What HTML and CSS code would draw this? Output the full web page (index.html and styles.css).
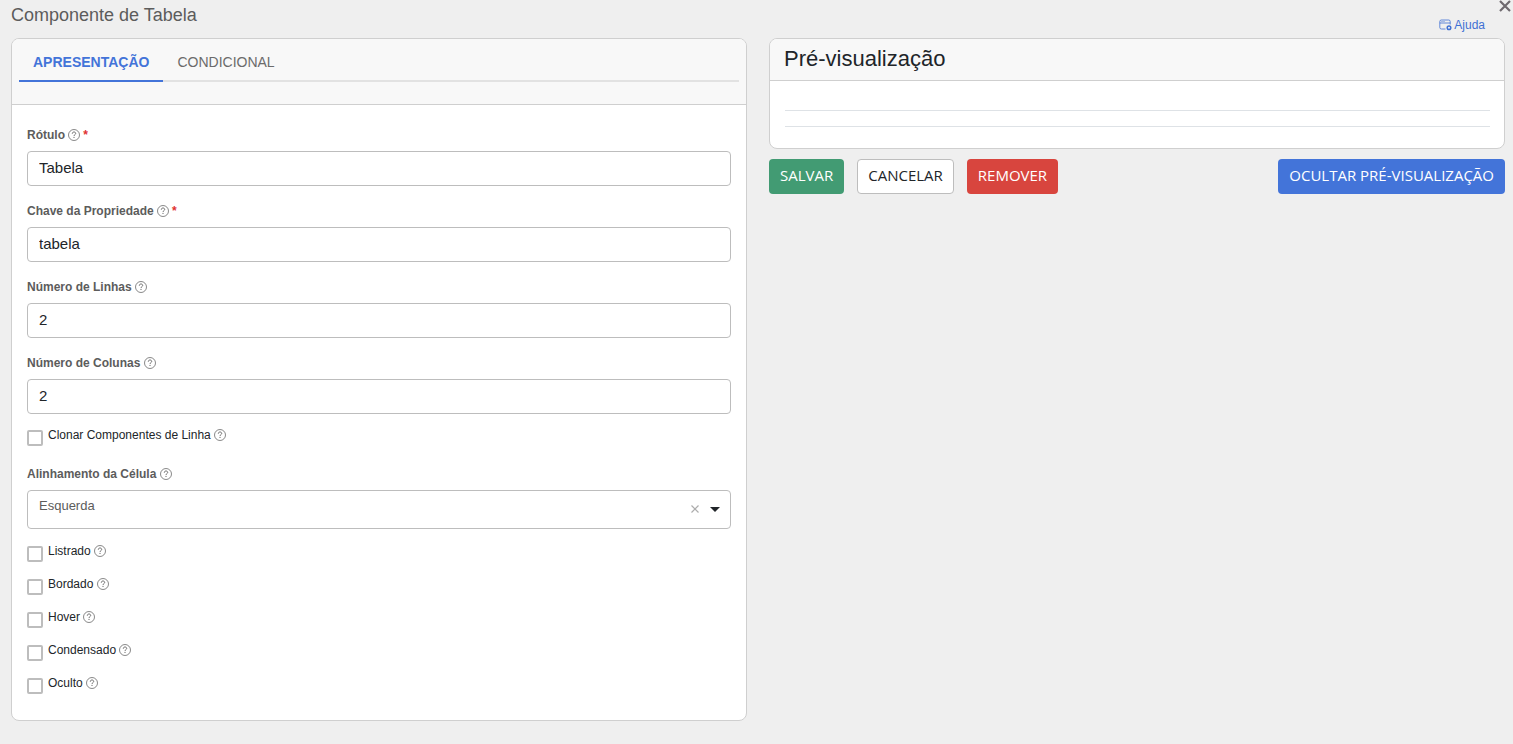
FILE: index.html
```html
<!DOCTYPE html>
<html lang="pt-BR">
<head>
<meta charset="utf-8">
<meta name="viewport" content="width=device-width, initial-scale=1">
<title>Componente de Tabela</title>
<link rel="stylesheet" href="styles.css">
</head>
<body>
<svg class="sprite" aria-hidden="true">
  <symbol id="help" viewBox="0 0 12 12">
    <circle cx="6" cy="6" r="5.5" fill="none" stroke="currentColor" stroke-width=".8"/>
    <path d="M4.3 4.7C4.3 3.6 5 3 6 3s1.700.6 1.700 1.500C7.700 5.600 6 5.600 6 7.100" fill="none" stroke="currentColor" stroke-width="1"/>
    <path d="M5.500 8h1v1.100h-1z" fill="currentColor"/>
  </symbol>
</svg>
<button class="close" type="button" aria-label="Fechar">
  <svg viewBox="0 0 12 12" width="12" height="12"><path d="M1 1l10 10M11 1l-10 10" stroke="currentColor" stroke-width="2.200"/></svg>
</button>
<header class="top">
  <h1 class="title">Componente de Tabela</h1>
  <a class="help-link" href="#">
    <svg viewBox="0 0 13 12" width="13" height="12" fill="none" stroke="currentColor" stroke-width=".8">
      <path d="M6.500 10H2.500Q.8 10 .8 8.500V2.500Q.8 1 2.300 1H9.700Q11.200 1 11.200 2.500V5.500M.8 4H11.200"/>
      <path d="M2.500 2.500h1M4.500 2.500h1"/>
      <circle cx="10" cy="8.800" r="1.800" stroke-width="1.500"/>
    </svg>
    Ajuda</a>
</header>
<main class="columns">
  <section class="card settings">
    <div class="card-head tabs-head">
      <div class="tabs" role="tablist">
        <button class="tab active" type="button" role="tab" aria-selected="true">APRESENTAÇÃO</button>
        <button class="tab" type="button" role="tab" aria-selected="false">CONDICIONAL</button>
      </div>
    </div>
    <form class="form">
      <div class="field">
        <label class="label" for="rotulo">Rótulo <svg class="q"><use href="#help"/></svg><span class="req">*</span></label>
        <input class="input" id="rotulo" type="text" value="Tabela">
      </div>
      <div class="field">
        <label class="label" for="chave">Chave da Propriedade <svg class="q"><use href="#help"/></svg><span class="req">*</span></label>
        <input class="input" id="chave" type="text" value="tabela">
      </div>
      <div class="field">
        <label class="label" for="linhas">Número de Linhas <svg class="q"><use href="#help"/></svg></label>
        <input class="input" id="linhas" type="text" value="2">
      </div>
      <div class="field">
        <label class="label" for="colunas">Número de Colunas <svg class="q"><use href="#help"/></svg></label>
        <input class="input" id="colunas" type="text" value="2">
      </div>
      <div class="check clone">
        <input class="box" id="clonar" type="checkbox">
        <label class="check-label" for="clonar">Clonar Componentes de Linha <svg class="q"><use href="#help"/></svg></label>
      </div>
      <div class="field align">
        <label class="label" for="alinhamento">Alinhamento da Célula <svg class="q"><use href="#help"/></svg></label>
        <div class="select-wrap">
          <select class="select" id="alinhamento"><option>Esquerda</option></select>
          <button class="clear" type="button" aria-label="Limpar"><svg viewBox="0 0 8 8" width="8" height="8"><path d="M.5.5l7 7M7.500.5l-7 7" stroke="currentColor" stroke-width="1.200"/></svg></button>
          <svg class="caret" viewBox="0 0 10 5" width="10" height="5"><path d="M0 0h10L5 5z" fill="currentColor"/></svg>
        </div>
      </div>
      <div class="check">
        <input class="box" id="listrado" type="checkbox">
        <label class="check-label" for="listrado">Listrado <svg class="q"><use href="#help"/></svg></label>
      </div>
      <div class="check">
        <input class="box" id="bordado" type="checkbox">
        <label class="check-label" for="bordado">Bordado <svg class="q"><use href="#help"/></svg></label>
      </div>
      <div class="check">
        <input class="box" id="hover" type="checkbox">
        <label class="check-label" for="hover">Hover <svg class="q"><use href="#help"/></svg></label>
      </div>
      <div class="check">
        <input class="box" id="condensado" type="checkbox">
        <label class="check-label" for="condensado">Condensado <svg class="q"><use href="#help"/></svg></label>
      </div>
      <div class="check">
        <input class="box" id="oculto" type="checkbox">
        <label class="check-label" for="oculto">Oculto <svg class="q"><use href="#help"/></svg></label>
      </div>
    </form>
  </section>
  <section class="side">
    <div class="card">
      <div class="card-head preview-head"><h2 class="preview-title">Pré-visualização</h2></div>
      <div class="preview-body">
        <table class="preview-table">
          <tbody>
            <tr><td></td><td></td></tr>
            <tr><td></td><td></td></tr>
          </tbody>
        </table>
      </div>
    </div>
    <div class="actions">
      <button class="btn save" type="button">SALVAR</button>
      <button class="btn cancel" type="button">CANCELAR</button>
      <button class="btn remove" type="button">REMOVER</button>
      <button class="btn toggle" type="button">OCULTAR PRÉ-VISUALIZAÇÃO</button>
    </div>
  </section>
</main>
</body>
</html>
```
FILE: styles.css
```css
* { box-sizing: border-box; }
body {
  margin: 0;
  min-height: 100vh;
  padding: 4px 8px 22px 11px;
  background: #efefef;
  color: #212529;
  font-family: "Liberation Sans", Arial, sans-serif;
}
button, input, select { font-family: inherit; margin: 0; }
.sprite { display: none; }
.close {
  position: absolute;
  top: 0;
  right: 2px;
  padding: 0;
  border: 0;
  background: none;
  color: #6f6a6f;
  line-height: 0;
}
.top {
  display: flex;
  justify-content: space-between;
  align-items: flex-start;
  height: 34px;
}
.title {
  margin: 0;
  font-size: 18px;
  line-height: 22px;
  font-weight: 400;
  color: #5c5c5c;
}
.help-link {
  display: flex;
  align-items: center;
  gap: 2px;
  margin: 12px 20px 0 0;
  font-size: 12px;
  line-height: 18px;
  color: #3f70d4;
  text-decoration: none;
}
.columns {
  display: grid;
  grid-template-columns: 1fr 1fr;
  gap: 22px;
  align-items: start;
}
.card {
  border: 1px solid #cfcfcf;
  border-radius: 8px;
  background: #fff;
  overflow: hidden;
}
.card-head {
  background: #f8f8f8;
  border-bottom: 1px solid #cfcfcf;
}
.tabs-head { padding: 5px 7px 22px; }
.tabs {
  display: flex;
  border-bottom: 2px solid #e2e2e2;
}
.tab {
  height: 38px;
  margin-bottom: -2px;
  padding: 0 14px;
  border: 0;
  border-bottom: 2px solid transparent;
  background: none;
  font-size: 14px;
  color: #6b6b6b;
}
.tab.active {
  border-color: #4374d9;
  color: #4374d9;
  font-weight: 700;
}
.form { padding: 21px 15px 13px; }
.field { margin-bottom: 16px; }
.label {
  display: block;
  margin-bottom: 7px;
  font-size: 12px;
  line-height: 18px;
  font-weight: 700;
  color: #5c5c5c;
}
.q {
  width: 12px;
  height: 12px;
  vertical-align: -2px;
  color: #6b6b6b;
}
.req { margin-left: 3px; color: #e03131; }
.input, .select {
  display: block;
  width: 100%;
  border: 1px solid #bdbdbd;
  border-radius: 4px;
  background: #fff;
}
.input {
  height: 35px;
  padding: 0 11px 2px;
  font-size: 15px;
  color: #212529;
}
.check {
  display: flex;
  align-items: flex-start;
  gap: 5px;
  height: 18px;
  margin-bottom: 15px;
}
.box {
  appearance: none;
  width: 16px;
  height: 16px;
  margin-top: 4px;
  border: 2px solid #bdbdbd;
  border-radius: 2px;
  background: #fff;
}
.check-label {
  font-size: 12px;
  line-height: 18px;
  color: #212529;
}
.clone { margin: -4px 0 21px; }
.align { margin-bottom: 13px; }
.select-wrap { position: relative; }
.select {
  appearance: none;
  height: 39px;
  padding: 0 50px 8px 11px;
  font-size: 13px;
  color: #5c5c5c;
}
.clear {
  position: absolute;
  top: 15px;
  right: 32px;
  padding: 0;
  border: 0;
  background: none;
  color: #adadad;
  line-height: 0;
}
.caret {
  position: absolute;
  top: 17px;
  right: 11px;
  color: #212529;
  pointer-events: none;
}
.preview-head { padding: 6px 15px 7px 14px; }
.preview-title {
  margin: 0;
  font-size: 22px;
  line-height: 28px;
  font-weight: 400;
}
.preview-body { padding: 13px 14px 21px 15px; }
.preview-table { width: 100%; border-collapse: collapse; }
.preview-table td {
  height: 16px;
  padding: 0;
  border-bottom: 1px solid #dee2e6;
}
.actions {
  display: flex;
  gap: 13px;
  margin-top: 10px;
}
.btn {
  height: 35px;
  padding: 0 10px 2px;
  border: 1px solid transparent;
  border-radius: 4px;
  font-family: "Open Sans", sans-serif;
  font-size: 15px;
  color: #fff;
}
.save { background: #429b73; }
.cancel { background: #fff; border-color: #bdbdbd; color: #212529; }
.remove { background: #d8453e; }
.toggle { margin-left: auto; background: #4374d9; }
```
